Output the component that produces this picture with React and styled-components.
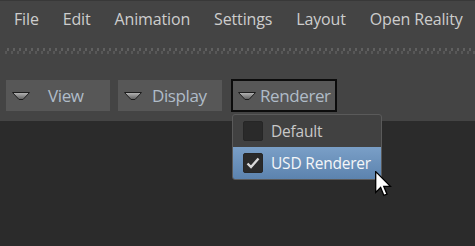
import React from "react";
import styled, { createGlobalStyle } from "styled-components";

const Global = createGlobalStyle`
  html, body {
    margin: 0;
    padding: 0;
    background: #2b2b2b;
    overflow: hidden;
  }
  body {
    font-family: "Open Sans", "Noto Sans", sans-serif;
  }
`;

const menus = ["File", "Edit", "Animation", "Settings", "Layout", "Open Reality"];

const tools = [
  { label: "View", offset: 18 },
  { label: "Display", offset: 10 },
  { label: "Renderer", offset: 4, active: true },
];

const Triangle = () => (
  <svg width="18" height="9" viewBox="0 0 18 9">
    <defs>
      <linearGradient id="tri" x1="0" y1="0" x2="0" y2="1">
        <stop offset="0" stopColor="#b8b8b8" />
        <stop offset="1" stopColor="#5a5a5a" />
      </linearGradient>
    </defs>
    <path d="M0.5 0.5 H17.5 L11 7.5 H7 Z" fill="url(#tri)" stroke="#1c1c1c" strokeWidth="1" />
  </svg>
);

const Check = () => (
  <svg width="14" height="12" viewBox="0 0 14 12">
    <path d="M1.5 6.5 L5 10 L12.5 1.5" fill="none" stroke="#d8d8d8" strokeWidth="2.4" />
  </svg>
);

const Cursor = () => (
  <svg width="17" height="26" viewBox="0 0 13 20">
    <path
      d="M0.5 0.5 V16.5 L4.3 12.7 L6.8 18.8 L9.2 17.8 L6.7 11.8 H11.8 Z"
      fill="#fff"
      stroke="#000"
      strokeWidth="1"
      strokeLinejoin="miter"
    />
  </svg>
);

export default function App() {
  return (
    <>
      <Global />
      <Page>
        <Header>
          <MenuBar>
            {menus.map((m) => (
              <MenuItem key={m}>{m}</MenuItem>
            ))}
          </MenuBar>
          <Grip />
          <Toolbar>
            {tools.map((t) => (
              <ToolButton key={t.label} $active={t.active}>
                <Triangle />
                <ToolLabel $offset={t.offset}>{t.label}</ToolLabel>
              </ToolButton>
            ))}
          </Toolbar>
        </Header>
        <Viewport />
        <Dropdown>
          <Option>
            <Box />
            <OptionText>Default</OptionText>
          </Option>
          <Option $selected>
            <Box>
              <Check />
            </Box>
            <OptionText $selected>USD Renderer</OptionText>
          </Option>
        </Dropdown>
        <Pointer>
          <Cursor />
        </Pointer>
      </Page>
    </>
  );
}

const Page = styled.div`
  position: relative;
  width: 475px;
  height: 246px;
  display: flex;
  flex-direction: column;
  overflow: hidden;
`;

const Header = styled.div`
  background: #444444;
  border-top: 1px solid #383838;
  padding-bottom: 9px;
`;

const MenuBar = styled.div`
  display: flex;
  align-items: center;
  gap: 24px;
  height: 35px;
  padding-left: 14px;
`;

const MenuItem = styled.span`
  color: #cdcdcd;
  font-size: 16px;
  letter-spacing: -0.15px;
`;

const Grip = styled.div`
  margin: 12px 0 0 4px;
  height: 7px;
  background-image: url("data:image/svg+xml;utf8,<svg xmlns='http://www.w3.org/2000/svg' width='6' height='7'><rect x='3' y='0' width='2' height='3' fill='%23606060'/><rect x='1' y='3' width='2' height='3' fill='%23575757'/></svg>");
  background-repeat: repeat-x;
`;

const Toolbar = styled.div`
  display: flex;
  gap: 8px;
  margin-top: 25px;
  padding-left: 6px;
  align-items: flex-start;
`;

const ToolButton = styled.div`
  box-sizing: border-box;
  display: flex;
  align-items: center;
  width: ${(p) => (p.$active ? "106px" : "104px")};
  height: ${(p) => (p.$active ? "33px" : "31px")};
  margin-top: ${(p) => (p.$active ? "-1px" : "0")};
  margin-left: ${(p) => (p.$active ? "1px" : "0")};
  padding-left: ${(p) => (p.$active ? "5px" : "6px")};
  background: #575757;
  border: ${(p) => (p.$active ? "2px solid #0c0c0c" : "none")};
  svg {
    margin-top: 2px;
  }
`;

const ToolLabel = styled.span`
  margin-left: ${(p) => p.$offset}px;
  color: #b0bcc8;
  font-size: 17px;
  letter-spacing: -0.4px;
`;

const Viewport = styled.div`
  flex: 1;
  background: #2b2b2b;
`;

const Dropdown = styled.div`
  position: absolute;
  left: 232px;
  top: 114px;
  width: 150px;
  box-sizing: border-box;
  background: #414141;
  border: 1px solid #5a5a5a;
  border-radius: 3px;
  overflow: hidden;
`;

const Option = styled.div`
  display: flex;
  align-items: center;
  height: 32px;
  padding-left: 10px;
  background: ${(p) =>
    p.$selected ? "linear-gradient(#7a9fc7, #5c83ae)" : "transparent"};
`;

const Box = styled.div`
  box-sizing: border-box;
  width: 20px;
  height: 20px;
  border-radius: 2px;
  background: #2a2a2a;
  border: 1px solid #262626;
  display: flex;
  align-items: center;
  justify-content: center;
`;

const OptionText = styled.span`
  margin-left: 8px;
  color: ${(p) => (p.$selected ? "#f4f6f8" : "#c8c8c8")};
  font-size: 15.5px;
  letter-spacing: -0.2px;
`;

const Pointer = styled.div`
  position: absolute;
  left: 375px;
  top: 171px;
  line-height: 0;
`;
